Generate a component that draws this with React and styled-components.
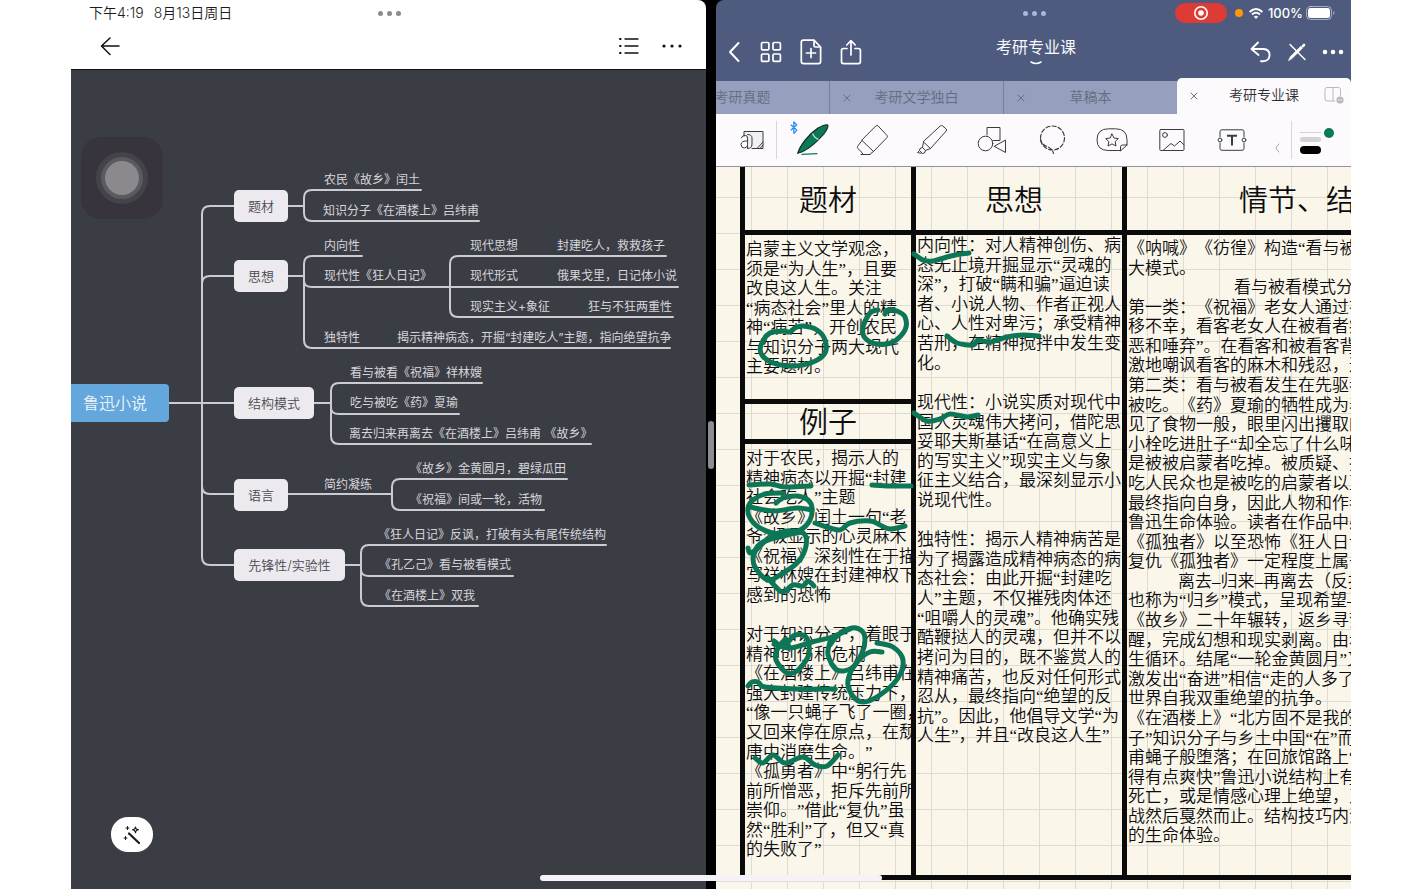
import React from 'react';
import styled, { createGlobalStyle } from 'styled-components';

const GlobalStyle = createGlobalStyle`
  *, *::before, *::after { box-sizing: border-box; }
  body {
    margin: 0;
    background: #fff;
    font-family: Inter, "Noto Sans CJK SC", sans-serif;
    text-spacing-trim: space-all;
  }
  button { font: inherit; color: inherit; background: none; border: 0; padding: 0; cursor: pointer; }
  svg { display: block; }
`;

const Stage = styled.div`
  min-height: 100vh;
  padding: 0 71px;
  display: flex;
  position: relative;
`;

const Tablet = styled.div`
  flex: 1;
  min-width: 0;
  display: grid;
  grid-template-columns: minmax(0, 1fr) 10px minmax(0, 1fr);
  background: #000;
`;

const Pane = styled.section`
  display: flex;
  flex-direction: column;
  overflow: hidden;
  border-radius: ${(p) => p.$radius};
`;

const Splitter = styled.div`
  display: flex;
  align-items: center;
  justify-content: center;
`;

const SplitHandle = styled.div`
  width: 6px;
  height: 48px;
  border-radius: 3px;
  background: #8d8b94;
`;

const HomeBar = styled.div`
  position: absolute;
  left: 50%;
  bottom: 8px;
  width: 342px;
  height: 6px;
  margin-left: -171px;
  border-radius: 3px;
  background: #f5f3f7;
`;

const StatusRow = styled.div`
  height: 26px;
  display: grid;
  grid-template-columns: 1fr auto 1fr;
  align-items: center;
  padding: 0 16px 0 18px;
  font-size: 13px;
  line-height: 26px;
`;

const StatusTime = styled.div`
  display: flex;
  gap: 10px;
  font-size: 14px;
  font-weight: 350;
  color: #1b1b1d;
`;

const StatusIcons = styled.div`
  display: flex;
  align-items: center;
  justify-content: flex-end;
  color: #fff;
  font-weight: 500;
`;

const RecordPill = styled.span`
  width: 52px;
  height: 20px;
  margin-right: 8px;
  border-radius: 10px;
  background: #dc3c35;
  display: flex;
  align-items: center;
  justify-content: center;
`;

const MicDot = styled.span`
  width: 8px;
  height: 8px;
  margin-right: 5px;
  border-radius: 50%;
  background: #ff9708;
`;

const BatteryText = styled.span`
  margin: 0 3px 0 4px;
`;

const Grabber = styled.button`
  display: flex;
  gap: 4px;
  color: ${(p) => p.$color};
  &::before, &::after, & > span {
    content: "";
    width: 5px;
    height: 5px;
    border-radius: 50%;
    background: currentColor;
  }
`;

/* ---------- mind map side ---------- */

const MapHeader = styled.header`
  height: 70px;
  background: #fff;
  border-bottom: 1px solid #111;
`;

const MapTools = styled.div`
  height: 39px;
  padding: 0 23px 0 28px;
  display: flex;
  align-items: center;
  color: #111;
`;

const MapToolButton = styled.button`
  width: 22px;
  height: 22px;
  display: flex;
  align-items: center;
  justify-content: center;
  margin-left: ${(p) => p.$before || '0'};
`;

const Canvas = styled.div`
  flex: 1;
  min-height: 640px;
  position: relative;
  overflow: hidden;
  background: #3b3d45;
`;

const Branches = styled.svg`
  position: absolute;
  left: 0;
  top: 0;
  fill: none;
  stroke: #cccbd1;
  stroke-width: 2;
  stroke-linecap: round;
`;

const Node = styled.div`
  position: absolute;
  left: ${(p) => p.$x}px;
  top: ${(p) => p.$y}px;
  width: ${(p) => p.$w}px;
  height: 32px;
  border-radius: 5px;
  background: #ece9ef;
  color: #4b4a51;
  font-size: 13px;
  font-weight: 350;
  line-height: 32px;
  text-align: center;
  white-space: nowrap;
`;

const RootNode = styled(Node)`
  height: 38px;
  border-radius: 0 4px 4px 0;
  padding-right: 10px;
  background: #64a7dc;
  color: #eef5fb;
  font-size: 16px;
  line-height: 38px;
`;

const Leaf = styled.span`
  position: absolute;
  left: ${(p) => p.$x}px;
  top: ${(p) => p.$y}px;
  color: #d6d5da;
  font-size: 12px;
  line-height: 20px;
  white-space: pre;
`;

const AssistiveTouch = styled.button`
  position: absolute;
  left: 10px;
  top: 67px;
  width: 82px;
  height: 82px;
  border-radius: 20px;
  background: #37343d;
  display: flex;
  align-items: center;
  justify-content: center;
`;

const MagicButton = styled.button`
  position: absolute;
  left: 40px;
  bottom: 37px;
  width: 42px;
  height: 35px;
  border-radius: 17px;
  background: #fff;
  color: #1a1a1c;
  display: flex;
  align-items: center;
  justify-content: center;
`;

/* ---------- notebook side ---------- */

const NoteHeader = styled.header`
  background: #4f5b7e;
  color: #fff;
`;

const NavRow = styled.div`
  height: 52px;
  padding: 0 7px 0 12px;
  display: grid;
  grid-template-columns: 1fr auto 1fr;
  align-items: center;
`;

const NavGroup = styled.div`
  display: flex;
  align-items: center;
  gap: ${(p) => p.$gap};
  justify-content: ${(p) => p.$align || 'flex-start'};
`;

const NavButton = styled.button`
  display: flex;
`;

const TitleButton = styled.button`
  display: flex;
  flex-direction: column;
  align-items: center;
  gap: 4px;
  font-size: 16px;
  line-height: 20px;
  color: #f7f8fc;
`;

const TabStrip = styled.nav`
  height: 36px;
  display: flex;
  justify-content: flex-end;
  align-items: flex-end;
  overflow: hidden;
`;

const Tab = styled.div`
  flex: 0 0 174px;
  height: ${(p) => (p.$active ? '36px' : '33px')};
  display: grid;
  grid-template-columns: 34px 1fr 34px;
  align-items: center;
  justify-items: center;
  font-size: 14px;
  font-weight: 350;
  line-height: 20px;
  padding-bottom: 2px;
  border-radius: ${(p) => (p.$active ? '5px 5px 0 0' : '0')};
  background: ${(p) => (p.$active ? '#fcfafd' : '#969fbd')};
  color: ${(p) => (p.$active ? '#2d2d33' : '#666b82')};
  border-left: ${(p) => (p.$active ? '0' : '1px solid #75809f')};
`;

const CloseTab = styled.button`
  display: flex;
  padding-top: 2px;
  color: #6d6f7d;
`;

const ToolRow = styled.div`
  height: 53px;
  padding: 0 12px;
  display: flex;
  align-items: center;
  background: #fcfafd;
  border-bottom: 1px solid #94939a;
  color: #3b3b44;
`;

const Tool = styled.button`
  flex: 0 0 ${(p) => p.$w || '60px'};
  height: 40px;
  display: flex;
  align-items: center;
  justify-content: center;
`;

const ToolDivider = styled.div`
  width: 1px;
  height: 38px;
  margin: 0 5px 0 0;
  background: #d9d7dc;
`;

const MoreTools = styled.button`
  margin-left: auto;
  margin-right: 11px;
  padding-top: 16px;
  color: #a5a4aa;
`;

const Paper = styled.div`
  flex: 1;
  position: relative;
  overflow: hidden;
  padding-left: 24px;
  background-color: #faf7ea;
  background-image:
    linear-gradient(to right, #dedcd0 1px, transparent 1px),
    linear-gradient(to bottom, #dedcd0 1px, transparent 1px);
  background-size: 36px 36px;
  background-position: 35px 30px;
`;

const NoteTable = styled.table`
  table-layout: fixed;
  width: 882px;
  border-collapse: separate;
  border-spacing: 0;
  color: #0c0c10;
  font-family: "Liberation Serif", "Noto Sans CJK SC", sans-serif;
  font-weight: 350;
`;

const Col = styled.col`
  width: ${(p) => p.$w};
`;

const HeadCell = styled.th`
  height: ${(p) => p.$h};
  padding: ${(p) => p.$top || '0'} ${(p) => p.$end || '0'} 0 ${(p) => p.$start || '0'};
  border-left: 5px solid #0b0b0c;
  border-bottom: 5px solid #0b0b0c;
  font-size: 29px;
  line-height: 32px;
  font-weight: 350;
  text-align: ${(p) => p.$align || 'center'};
`;

const TextCell = styled.td`
  height: ${(p) => p.$h || 'auto'};
  padding: ${(p) => p.$top || '0'} 0 0 1px;
  border-left: 5px solid #0b0b0c;
  border-bottom: 5px solid #0b0b0c;
  vertical-align: top;
`;

const Lines = styled.div`
  height: ${(p) => p.$h};
  display: grid;
  grid-auto-rows: minmax(0, 1fr);
  font-size: 17px;
  line-height: 20px;
  white-space: pre;
`;

const Line = styled.div`
  padding-left: ${(p) => p.$indent || 0}px;
`;

const Ink = styled.svg`
  position: absolute;
  left: 0;
  top: 0;
  fill: none;
  stroke: #0c7656;
  stroke-width: 5;
  stroke-linecap: round;
  stroke-linejoin: round;
  pointer-events: none;
`;

/* ---------- data ---------- */

const nodes = [
  { t: '题材', x: 163, y: 120, w: 54 },
  { t: '思想', x: 163, y: 190, w: 54 },
  { t: '结构模式', x: 163, y: 317, w: 80 },
  { t: '语言', x: 163, y: 409, w: 54 },
  { t: '先锋性/实验性', x: 163, y: 479, w: 111 },
];

const leaves = [
  ['农民《故乡》闰土', 253, 100],
  ['知识分子《在酒楼上》吕纬甫', 252, 131],
  ['内向性', 253, 166],
  ['现代性《狂人日记》', 253, 196],
  ['独特性', 253, 258],
  ['现代思想', 399, 166],
  ['封建吃人，救救孩子', 486, 166],
  ['现代形式', 399, 196],
  ['俄果戈里，日记体小说', 486, 196],
  ['现实主义+象征', 399, 227],
  ['狂与不狂两重性', 517, 227],
  ['揭示精神病态，开掘“封建吃人”主题，指向绝望抗争', 326, 258],
  ['看与被看《祝福》祥林嫂', 279, 293],
  ['吃与被吃《药》夏瑜', 279, 323],
  ['离去归来再离去《在酒楼上》吕纬甫 《故乡》', 278, 354],
  ['简约凝练', 253, 405],
  ['《故乡》金黄圆月，碧绿瓜田', 339, 389],
  ['《祝福》间或一轮，活物', 339, 420],
  ['《狂人日记》反讽，打破有头有尾传统结构', 307, 455],
  ['《孔乙己》看与被看模式', 308, 485],
  ['《在酒楼上》双我', 308, 516],
];

const branchPaths = [
  'M98 333H163',
  'M163 136H139Q131 136 131 144V487Q131 495 139 495H163',
  'M163 206H139Q131 206 131 214',
  'M163 424H139Q131 424 131 416',
  'M217 136H233',
  'M350 120H241Q233 120 233 128V143Q233 151 241 151H408',
  'M217 206H233',
  'M291 186H241Q233 186 233 194V270Q233 278 241 278H599',
  'M233 211Q233 217 241 217H607',
  'M595 186H387Q379 186 379 194V239Q379 247 387 247H602',
  'M243 333H260',
  'M411 313H268Q260 313 260 321V366Q260 374 268 374H520',
  'M260 338Q260 344 268 344H388',
  'M217 424H321',
  'M496 409H329Q321 409 321 417V432Q321 440 329 440H473',
  'M274 495H290',
  'M535 475H298Q290 475 290 483V528Q290 536 298 536H407',
  'M290 500Q290 506 298 506H442',
];

const themeLines = [
  '启蒙主义文学观念，', '须是“为人生”，且要', '改良这人生。关注', '“病态社会”里人的精',
  '神“病苦”，开创农民', '与知识分子两大现代', '主要题材。',
];

const exampleLines = [
  '对于农民，揭示人的', '精神病态以开掘“封建', '社会吃人”主题', '《故乡》闰土一句“老', '爷”极显示的心灵麻木',
  '《祝福》深刻性在于描', '写祥林嫂在封建神权下', '感到的恐怖', '', '对于知识分子，着眼于', '精神创伤和危机',
  '《在酒楼上》吕纬甫在', '强大封建传统压力下，', '“像一只蝇子飞了一圈，', '又回来停在原点，在颓',
  '唐中消磨生命。”', '《孤勇者》中“躬行先', '前所憎恶，拒斥先前所', '崇仰。”借此“复仇”虽',
  '然“胜利”了，但又“真', '的失败了”',
];

const thoughtLines = [
  '内向性：对人精神创伤、病', '态无止境开掘显示“灵魂的', '深”，打破“瞒和骗”逼迫读', '者、小说人物、作者正视人',
  '心、人性对卑污；承受精神', '苦刑，在精神搅拌中发生变', '化。', '', '现代性：小说实质对现代中', '国人灵魂伟大拷问，借陀思',
  '妥耶夫斯基话“在高意义上', '的写实主义”现实主义与象', '征主义结合，最深刻显示小', '说现代性。', '',
  '独特性：揭示人精神病苦是', '为了揭露造成精神病态的病', '态社会：由此开掘“封建吃', '人”主题，不仅摧残肉体还',
  '“咀嚼人的灵魂”。他确实残', '酷鞭挞人的灵魂，但并不以', '拷问为目的，既不鉴赏人的', '精神痛苦，也反对任何形式',
  '忍从，最终指向“绝望的反', '抗”。因此，他倡导文学“为', '人生”，并且“改良这人生”',
];

const plotLines = [
  '《呐喊》《彷徨》构造“看与被', '大模式。', { t: '看与被看模式分', indent: 106 }, '第一类：《祝福》老女人通过祥',
  '移不幸，看客老女人在被看者痛', '恶和唾弃”。在看客和被看客背', '激地嘲讽看客的麻木和残忍，这', '第二类：看与被看发生在先驱者',
  '被吃。《药》夏瑜的牺牲成为表', '见了食物一般，眼里闪出攫取的', '小栓吃进肚子“却全忘了什么味', '是被被启蒙者吃掉。被质疑、批',
  '吃人民众也是被吃的启蒙者以至', '最终指向自身，因此人物和作者', '鲁迅生命体验。读者在作品中感', '《孤独者》以至恐怖《狂人日记',
  '复仇《孤独者》一定程度上属于', { t: '离去–归来–再离去（反抗', indent: 50 }, '也称为“归乡”模式，呈现希望–', '《故乡》二十年辗转，返乡寻梦',
  '醒，完成幻想和现实剥离。由希', '生循环。结尾“一轮金黄圆月”又', '激发出“奋进”相信“走的人多了', '世界自我双重绝望的抗争。',
  '《在酒楼上》“北方固不是我的', '子”知识分子与乡土中国“在”而', '甫蝇子般堕落；在回旅馆路上“', '得有点爽快”鲁迅小说结构上有',
  '死亡，或是情感心理上绝望，又', '战然后戛然而止。结构技巧内涵', '的生命体验。',
];

/* Pen strokes as sampled points, in the coordinates of the ink layer's viewBox. */
const strokes = [
  [[878, 310], [870, 313], [863, 327], [865, 338], [877, 344], [893, 342], [905, 330], [905, 317], [897, 311], [888, 310], [885, 314]],
  [[785, 331], [770, 333], [761, 345], [762, 355], [773, 363], [793, 366], [813, 362], [825, 353], [825, 340], [817, 330], [803, 326], [795, 328], [790, 332], [784, 331]],
  [[914, 254], [923, 260], [933, 261], [947, 257], [960, 254], [969, 253]],
  [[947, 336], [957, 343], [973, 345], [978, 340], [990, 342], [1007, 337], [1023, 335], [1039, 336]],
  [[914, 413], [927, 421], [940, 419], [950, 414], [967, 417], [978, 415]],
  [[749, 485], [770, 484], [785, 487], [811, 486]],
  [[872, 485], [890, 486], [911, 486]],
  [[783, 493], [765, 494], [753, 500], [748, 508], [750, 518], [760, 528], [780, 534], [800, 530], [810, 520], [812, 508], [808, 500], [797, 496], [783, 498], [776, 503]],
  [[750, 507], [773, 511], [797, 508], [812, 510]],
  [[815, 523], [827, 527], [840, 530], [850, 523], [870, 521], [880, 525], [890, 529], [905, 526]],
  [[748, 548], [750, 553], [757, 549], [770, 537], [787, 531], [802, 532]],
  [[802, 532], [787, 535], [763, 542], [754, 553], [755, 567], [768, 580], [783, 573], [797, 563], [805, 550], [806, 537], [801, 531]],
  [[768, 578], [775, 586], [783, 592], [793, 585], [803, 586], [808, 581], [814, 586]],
  [[774, 641], [783, 647], [789, 641], [795, 635], [805, 636], [809, 645], [808, 657], [797, 671], [787, 673], [777, 662], [776, 652], [785, 640], [789, 647]],
  [[774, 644], [790, 648], [812, 642], [832, 637], [850, 629]],
  [[830, 642], [828, 655], [837, 670], [852, 668], [862, 653], [865, 640], [862, 631], [852, 628], [838, 635], [830, 645]],
  [[877, 643], [893, 647], [903, 660], [898, 678], [880, 695], [863, 702], [852, 695], [848, 680], [857, 662], [870, 652], [882, 652]],
  [[748, 686], [752, 682], [758, 682], [765, 687], [797, 689], [835, 689]],
  [[755, 758], [763, 763], [773, 755], [785, 763], [803, 757], [815, 765], [827, 766], [838, 755]],
];

/* Catmull-Rom smoothing turned into cubic Bézier segments. */
function smooth(points) {
  let d = `M${points[0][0]} ${points[0][1]}`;
  for (let i = 0; i < points.length - 1; i += 1) {
    const a = points[i - 1] || points[i];
    const b = points[i];
    const c = points[i + 1];
    const e = points[i + 2] || c;
    d += `C${b[0] + (c[0] - a[0]) / 6} ${b[1] + (c[1] - a[1]) / 6} ${c[0] - (e[0] - b[0]) / 6} ${c[1] - (e[1] - b[1]) / 6} ${c[0]} ${c[1]}`;
  }
  return d;
}

/* ---------- icons ---------- */

function Icon({ w, h, sw = 1, children, fill = 'none' }) {
  return (
    <svg width={w} height={h} viewBox={`0 0 ${w} ${h}`} fill={fill} stroke="currentColor" strokeWidth={sw} strokeLinecap="round" strokeLinejoin="round" aria-hidden="true">
      {children}
    </svg>
  );
}

const BackArrow = () => <Icon w={20} h={20} sw={1.5}><path d="M19 10H2M10 2L1.5 10L10 18.5" /></Icon>;
const ListIcon = () => (
  <Icon w={22} h={20} sw={1.3}>
    <path d="M7 3H20M7 10H20M7 17H20" />
    <path d="M2 3H2.6M2 10H2.6M2 17H2.6" strokeWidth="2" />
  </Icon>
);
const DotsIcon = ({ r, gap }) => (
  <Icon w={22} h={10} sw={0}>
    <g fill="currentColor">
      <circle cx={11 - gap} cy="5" r={r} /><circle cx="11" cy="5" r={r} /><circle cx={11 + gap} cy="5" r={r} />
    </g>
  </Icon>
);
const RecordIcon = () => (
  <Icon w={16} h={16} sw={1.6}>
    <circle cx="8" cy="8" r="6.2" /><circle cx="8" cy="8" r="2.8" fill="currentColor" stroke="none" />
  </Icon>
);
const WifiIcon = () => (
  <Icon w={16} h={13} sw={2}>
    <path d="M1.6 5Q8 -1 14.4 5M4 7.6Q8 4 12 7.6" strokeLinecap="butt" />
    <path d="M8 12L5.7 9.6Q8 7.8 10.3 9.6Z" fill="currentColor" stroke="none" />
  </Icon>
);
const BatteryIcon = () => (
  <Icon w={29} h={14}>
    <rect x="0.5" y="0.5" width="25" height="13" rx="4" opacity="0.5" />
    <rect x="2" y="2" width="22" height="10" rx="2.5" fill="currentColor" stroke="none" />
    <path d="M27.3 5V9Q28.6 8.4 28.6 7T27.3 5Z" fill="currentColor" stroke="none" opacity="0.5" />
  </Icon>
);
const ChevronLeft = () => <Icon w={14} h={22} sw={2}><path d="M10.5 2L2 11L10.5 20" /></Icon>;
const GridIcon = () => (
  <Icon w={22} h={22} sw={1.7}>
    <rect x="1.5" y="1.5" width="7.4" height="7.4" rx="1.2" /><rect x="13" y="1.5" width="7.4" height="7.4" rx="1.2" />
    <rect x="1.5" y="13" width="7.4" height="7.4" rx="1.2" /><rect x="13" y="13" width="7.4" height="7.4" rx="1.2" />
  </Icon>
);
const AddPageIcon = () => (
  <Icon w={22} h={26} sw={1.7}>
    <path d="M3.5 1.2H14L20.6 8V22.5Q20.6 24.6 18.5 24.6H3.5Q1.3 24.6 1.3 22.5V3.3Q1.3 1.2 3.5 1.2Z" />
    <path d="M14 1.5V6.5Q14 8 15.5 8H20.3M11 9.5V18.5M6.5 14H15.5" />
  </Icon>
);
const ShareIcon = () => (
  <Icon w={22} h={26} sw={1.7}>
    <path d="M7 9.5H3.5Q1.5 9.5 1.5 11.5V22.5Q1.5 24.6 3.5 24.6H18.3Q20.4 24.6 20.4 22.5V11.5Q20.4 9.5 18.3 9.5H15M11 16V1.8M6.8 6L11 1.6L15.2 6" />
  </Icon>
);
const UndoIcon = () => <Icon w={22} h={22} sw={1.9}><path d="M8 1.5L1.5 8L8.5 14M2 8H13.5Q19.6 8.4 19.6 14Q19.4 20 13 20.2H11" /></Icon>;
const PenCrossIcon = () => (
  <Icon w={20} h={20} sw={1.5}>
    <path d="M3 2.5L18 17.5" />
    <path d="M1.6 18.4L3.2 14.8L13.8 4.2L15.6 6L5 16.6Z" fill="currentColor" strokeWidth="0.6" />
    <path d="M15.9 4.1L17 3" strokeWidth="2.6" />
  </Icon>
);
const CloseIcon = () => <Icon w={8} h={8}><path d="M1 1L7 7M7 1L1 7" /></Icon>;
const SplitTabIcon = () => (
  <svg width="20" height="18" viewBox="0 0 20 18" fill="none" stroke="#b9b8bf" aria-hidden="true">
    <path d="M16.5 10V3.5Q16.5 1.5 14.5 1.5H3Q1 1.5 1 3.5V13Q1 15 3 15H11M9 1.5V15" />
    <circle cx="16" cy="14" r="3.6" fill="#b9b8bf" stroke="none" />
    <path d="M13.8 14H14.8M15.5 14H16.5M17.2 14H18.2" stroke="#fff" />
  </svg>
);
const ReadIcon = () => (
  <Icon w={24} h={20}>
    <path d="M4 6V1.5H23V18.5H12" fill="#f0eff2" />
    <path d="M23 12L17 18.5M23 15L20 18.5" />
    <path d="M1.2 8Q2.2 5.2 5.5 5.4Q7.6 5.6 7.6 8V18.5M7.6 11Q1 10.6 1 14.6Q1.2 18 4.2 18Q6.6 18 7.6 15.5M7.6 4.5Q12 4.5 12 8V14Q12 18.5 7.6 18.5" />
  </Icon>
);
const PenIcon = () => (
  <svg width="44" height="38" viewBox="0 0 44 38" fill="none" aria-hidden="true">
    <path d="M0.8 3.8L6.8 9.3L3.8 12.3V0.8L6.8 3.8L0.8 9.3" stroke="#2488f2" strokeWidth="1.2" strokeLinejoin="round" />
    <path d="M7.7 32.3C10 24 19 13 28 7Q36 2.6 37.8 4Q38.8 6.5 33.5 13.5C26 22 16 30.5 7.7 32.3Z" fill="#0b7a58" stroke="#15211d" strokeWidth="1.1" />
    <path d="M22.6 12.6Q24.4 17 28.4 18.4" stroke="#cfe6dd" strokeWidth="1.2" />
    <path d="M12 33.4L27 32.6" stroke="#0b7a58" strokeWidth="1.2" strokeLinecap="round" />
  </svg>
);
const EraserIcon = () => (
  <Icon w={32} h={32}>
    <path d="M20 1.8Q21 1 22 1.8L31 11.5Q31.6 12.6 31 13.5L17.5 27.5L6 16.5Z" />
    <path d="M6 16.5L1.5 22.5Q1 23.5 1.8 24.5L6 28.5L7 30.5H13.5L17.5 27.5M5 30.5H14" />
  </Icon>
);
const MarkerIcon = () => (
  <Icon w={32} h={32}>
    <path d="M24.5 1.8Q25.5 1 26.5 1.8L30.2 5Q31 6 30.2 7L14.5 24.5L7.5 18Z" />
    <path d="M7.5 18L6.5 23.5L9.5 26.5L14.5 24.5M6.5 23.5L4 24.5L3.5 26.5L6.5 29.5L8.5 29L9.5 26.5M3.5 26.5L1.5 28.5L5 29.3" />
  </Icon>
);
const ShapesIcon = () => (
  <Icon w={30} h={28}>
    <path d="M10 9V1.5H23V14.5H16" /><circle cx="8.5" cy="17.5" r="7.3" /><path d="M28.5 14.5V26.5L17.5 20.5Z" />
  </Icon>
);
const LassoIcon = () => (
  <Icon w={28} h={30} sw={1.2}>
    <circle cx="14.5" cy="13" r="12" strokeDasharray="4 2.2" />
    <path d="M2.6 14Q2.5 19 9 21.5Q14.5 23.5 15.5 28.5" strokeDasharray="4 2" />
  </Icon>
);
const StickerIcon = () => (
  <Icon w={32} h={26}>
    <path d="M24.5 23.5H12.5Q1 23.5 1 12.8Q1 1.8 12.5 1.8H19.5Q31 1.8 31 12.8V18L24.5 24V20Q24.5 18 26.5 18H31" />
    <path d="M16 7L18 11L22.3 11.6L19.2 14.6L20 19L16 16.9L12 19L12.8 14.6L9.7 11.6L14 11Z" />
  </Icon>
);
const ImageIcon = () => (
  <Icon w={26} h={24}>
    <rect x="0.8" y="1.5" width="24.2" height="21" rx="1" /><circle cx="6" cy="7" r="2.4" />
    <path d="M4.5 22L12 15.5L15.5 18L21 13L25 17" />
  </Icon>
);
const TextIcon = () => (
  <Icon w={30} h={24}>
    <path d="M3 9V3.5Q3 1.8 5 1.8H25Q27 1.8 27 3.5V9M27 15V20.5Q27 22.3 25 22.3H5Q3 22.3 3 20.5V15" />
    <circle cx="3" cy="12" r="1.9" /><circle cx="27" cy="12" r="1.9" />
    <path d="M10 7.8H20M15 7.8V17.5" strokeWidth="2" strokeLinecap="butt" />
  </Icon>
);
const StrokePicker = () => (
  <svg width="36" height="30" viewBox="0 0 36 30" aria-hidden="true">
    <rect x="0" y="7" width="21" height="1" fill="#d3d2d7" />
    <rect x="0" y="12" width="21" height="5" rx="2.5" fill="#d3d2d7" />
    <rect x="0" y="21" width="21" height="8" rx="4" fill="#000" />
    <circle cx="29" cy="8" r="5" fill="#0b7a58" />
  </svg>
);
const WandIcon = () => (
  <Icon w={20} h={20} sw={1.6}>
    <path d="M7 8.5L17 18" strokeWidth="2.2" />
    <path d="M5.5 1.5V4.5M4 3H7M3.5 11.5V14.5M2 13H5M13.5 2L14.2 4L16.5 4.8L14.2 5.6L13.5 7.8L12.6 5.6L10.5 4.8L12.6 4Z" strokeWidth="1.1" />
  </Icon>
);

/* ---------- parts ---------- */

function TextLines({ lines, height }) {
  return (
    <Lines $h={height}>
      {lines.map((l, i) => (
        <Line key={i} $indent={l.indent}>{l.t !== undefined ? l.t : l}</Line>
      ))}
    </Lines>
  );
}

function MindMapPane() {
  return (
    <Pane $radius="0 8px 0 0">
      <MapHeader>
        <StatusRow>
          <StatusTime><span>下午4:19</span><span>8月13日周日</span></StatusTime>
          <Grabber $color="#8b8b8d" aria-label="多任务"><span /></Grabber>
        </StatusRow>
        <MapTools>
          <MapToolButton aria-label="返回"><BackArrow /></MapToolButton>
          <MapToolButton $before="auto" aria-label="大纲"><ListIcon /></MapToolButton>
          <MapToolButton $before="21px" aria-label="更多"><DotsIcon r={1.6} gap={8} /></MapToolButton>
        </MapTools>
      </MapHeader>
      <Canvas>
        <AssistiveTouch aria-label="辅助触控">
          <svg width="52" height="52" viewBox="0 0 52 52" aria-hidden="true">
            <circle cx="26" cy="26" r="26" fill="#45434a" />
            <circle cx="26" cy="26" r="21" fill="#5b5a5f" />
            <circle cx="26" cy="26" r="17" fill="#8b898e" />
          </svg>
        </AssistiveTouch>
        <Branches width="635" height="640" viewBox="0 0 635 640" aria-hidden="true">
          {branchPaths.map((d) => <path key={d} d={d} />)}
        </Branches>
        <RootNode $x={0} $y={314} $w={98}>鲁迅小说</RootNode>
        {nodes.map((n) => <Node key={n.t} $x={n.x} $y={n.y} $w={n.w}>{n.t}</Node>)}
        {leaves.map(([t, x, y]) => <Leaf key={t} $x={x} $y={y}>{t}</Leaf>)}
        <MagicButton aria-label="美化"><WandIcon /></MagicButton>
      </Canvas>
    </Pane>
  );
}

function NotebookPane() {
  return (
    <Pane $radius="8px 0 0 0">
      <NoteHeader>
        <StatusRow>
          <span />
          <Grabber $color="#a9b7dc" aria-label="多任务"><span /></Grabber>
          <StatusIcons>
            <RecordPill><RecordIcon /></RecordPill>
            <MicDot />
            <WifiIcon />
            <BatteryText>100%</BatteryText>
            <BatteryIcon />
          </StatusIcons>
        </StatusRow>
        <NavRow>
          <NavGroup $gap="18px">
            <NavButton aria-label="返回"><ChevronLeft /></NavButton>
            <NavButton aria-label="缩略图"><GridIcon /></NavButton>
            <NavButton aria-label="添加页面"><AddPageIcon /></NavButton>
            <NavButton aria-label="分享"><ShareIcon /></NavButton>
          </NavGroup>
          <TitleButton>
            考研专业课
            <Icon w={12} h={6} sw={1.6}><path d="M1 1Q6 4 11 1" /></Icon>
          </TitleButton>
          <NavGroup $gap="15px" $align="flex-end">
            <NavButton aria-label="撤销"><UndoIcon /></NavButton>
            <NavButton aria-label="只读模式"><PenCrossIcon /></NavButton>
            <NavButton aria-label="更多"><DotsIcon r={2.3} gap={8} /></NavButton>
          </NavGroup>
        </NavRow>
        <TabStrip>
          {['考研真题', '考研文学独白', '草稿本'].map((t) => (
            <Tab key={t}>
              <CloseTab aria-label="关闭标签"><CloseIcon /></CloseTab>
              <span>{t}</span>
            </Tab>
          ))}
          <Tab $active>
            <CloseTab aria-label="关闭标签"><CloseIcon /></CloseTab>
            <span>考研专业课</span>
            <SplitTabIcon />
          </Tab>
        </TabStrip>
      </NoteHeader>
      <ToolRow>
        <Tool $w="48px" aria-label="阅读"><ReadIcon /></Tool>
        <ToolDivider />
        <Tool aria-label="钢笔"><PenIcon /></Tool>
        <Tool aria-label="橡皮"><EraserIcon /></Tool>
        <Tool aria-label="荧光笔"><MarkerIcon /></Tool>
        <Tool aria-label="形状"><ShapesIcon /></Tool>
        <Tool aria-label="套索"><LassoIcon /></Tool>
        <Tool aria-label="贴纸"><StickerIcon /></Tool>
        <Tool aria-label="图片"><ImageIcon /></Tool>
        <Tool aria-label="文本"><TextIcon /></Tool>
        <MoreTools aria-label="展开"><Icon w={5} h={10}><path d="M4 1Q1 4 1 5T4 9" /></Icon></MoreTools>
        <ToolDivider />
        <Tool $w="42px" aria-label="笔触"><StrokePicker /></Tool>
      </ToolRow>
      <Paper>
        <NoteTable>
          <colgroup><Col $w="171px" /><Col $w="211px" /><Col $w="500px" /></colgroup>
          <thead>
            <tr>
              <HeadCell $h="68px" $top="4px">题材</HeadCell>
              <HeadCell $h="68px" $top="4px" $end="10px">思想</HeadCell>
              <HeadCell $h="68px" $top="4px" $align="left" $start="112px">情节、结</HeadCell>
            </tr>
          </thead>
          <tbody>
            <tr>
              <TextCell $h="169px" $top="5px"><TextLines lines={themeLines} height="137px" /></TextCell>
              <TextCell rowSpan={3} $top="1px"><TextLines lines={thoughtLines} height="510px" /></TextCell>
              <TextCell rowSpan={3} $top="4px"><TextLines lines={plotLines} height="607px" /></TextCell>
            </tr>
            <tr><HeadCell $h="40px" $top="3px">例子</HeadCell></tr>
            <tr>
              <TextCell $h="436px" $top="5px"><TextLines lines={exampleLines} height="411px" /></TextCell>
            </tr>
          </tbody>
        </NoteTable>
        <Ink width="635" height="722" viewBox="716 167 635 722" aria-hidden="true">
          {strokes.map((s, i) => <path key={i} d={smooth(s)} />)}
        </Ink>
      </Paper>
    </Pane>
  );
}

export default function App() {
  return (
    <>
      <GlobalStyle />
      <Stage>
        <Tablet>
          <MindMapPane />
          <Splitter><SplitHandle /></Splitter>
          <NotebookPane />
        </Tablet>
        <HomeBar />
      </Stage>
    </>
  );
}
